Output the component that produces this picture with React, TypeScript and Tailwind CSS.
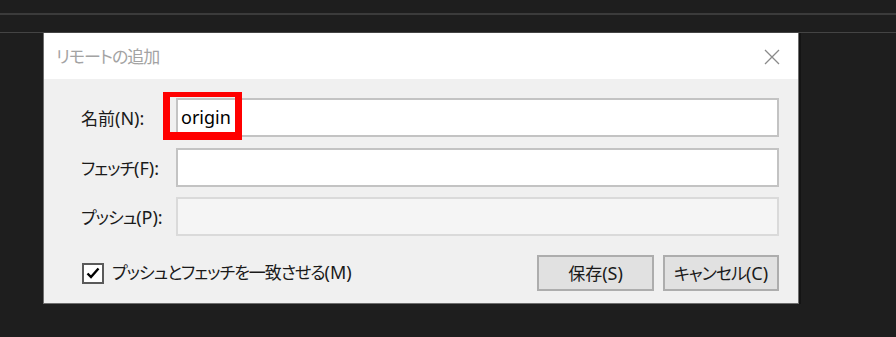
import React from "react";

const font = "font-['Noto_Sans','Noto_Sans_CJK_JP',sans-serif] [font-feature-settings:'palt']";

function T({ j, l, tight = true }: { j: string; l?: string; tight?: boolean }) {
  return (
    <span className="leading-none whitespace-nowrap">
      <span className={`text-[17px] ${tight ? "tracking-[-1px]" : ""}`}>{j}</span>
      {l && <span className="text-[18px]">{l}</span>}
    </span>
  );
}

function Field({ j, l, tight, disabled, value, mt, annotate }: { j: string; l: string; tight?: boolean; disabled?: boolean; value?: string; mt: string; annotate?: boolean }) {
  return (
    <div className={`flex items-center ${mt}`}>
      <div className="w-[132px] pl-[37px] text-[#1a1a1a] leading-none">
        <T j={j} l={l} tight={tight} />
      </div>
      <div className="relative flex-1">
        <div
          className={`h-[39px] border-2 flex items-center pl-[3px] text-[18px] text-black ${
            disabled ? "bg-[#f5f5f5] border-[#dadada]" : "bg-white border-[#c3c3c3]"
          }`}
        >
          {value}
        </div>
        {annotate && (
          <div className="absolute left-[-13px] top-[-6px] w-[79px] h-[48px] border-x-[7px] border-t-[5px] border-b-[8px] border-[#ff0000]" />
        )}
      </div>
    </div>
  );
}

export default function App() {
  return (
    <div className={`w-[896px] h-[337px] bg-[#1e1e1e] overflow-hidden ${font}`}>
      <div className="h-[13px]" />
      <div className="h-[2px] bg-[#3b3b3b]" />
      <div className="h-[17px]" />
      <div className="h-px bg-[#444444]" />
      <div className="ml-[43px] w-[756px] border-x border-b border-[#6e6e6e] bg-[#f0f0f0] shadow-[2px_0_0_#141414]">
        <div className="h-[46px] bg-white flex items-center justify-between pl-[12px] pr-[18px]">
          <span className="text-[17px] tracking-[-1px] text-[#a3a3a3] leading-none">リモートの追加</span>
          <svg width="16" height="16" viewBox="0 0 16 16" className="mt-[1px]">
            <path d="M1 1 L15 15 M15 1 L1 15" stroke="#8a8a8a" strokeWidth="1.3" fill="none" />
          </svg>
        </div>
        <div className="pt-[19px] pr-[19px] pb-[12px]">
          <Field j="名前" l="(N):" tight={false} value="origin" mt="" annotate />
          <Field j="フェッチ" l="(F):" mt="mt-[11px]" />
          <Field j="プッシュ" l="(P):" mt="mt-[10px]" disabled />
          <div className="flex items-center mt-[19px]">
            <div className="pl-[38px] flex items-center flex-1">
              <div className="w-[22px] h-[21px] border-2 border-[#5a5a5a] bg-white flex items-center justify-center">
                <svg width="14" height="12" viewBox="0 0 14 12">
                  <path d="M1.5 6.5 L5 10 L12.5 1.5" stroke="#000" strokeWidth="2.4" fill="none" />
                </svg>
              </div>
              <span className="ml-[8px] text-[#1a1a1a]">
                <T j="プッシュとフェッチを一致させる" l="(M)" />
              </span>
            </div>
            <div className="flex gap-[9px]">
              <button className="w-[117px] h-[36px] bg-[#e1e1e1] border-2 border-[#adadad] text-[#1a1a1a] leading-none">
                <T j="保存" l="(S)" tight={false} />
              </button>
              <button className="w-[116px] h-[36px] bg-[#e1e1e1] border-2 border-[#adadad] text-[#1a1a1a] leading-none">
                <T j="キャンセル" l="(C)" />
              </button>
            </div>
          </div>
        </div>
      </div>
    </div>
  );
}
